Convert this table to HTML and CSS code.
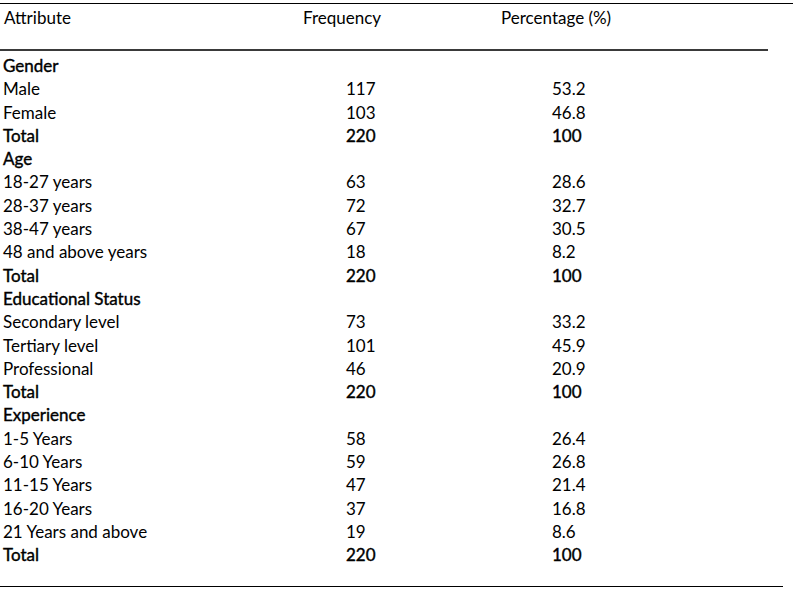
FILE: index.html
```html
<!DOCTYPE html>
<html lang="en">
<head>
<meta charset="utf-8">
<title>Respondent attributes</title>
<link rel="stylesheet" href="styles.css">
</head>
<body>
<div class="table">
  <div class="rule-top"></div>
  <div class="head">
    <span>Attribute</span>
    <span>Frequency</span>
    <span>Percentage (%)</span>
  </div>
  <div class="rule-head"></div>
  <div class="body">
    <div class="row group"><span>Gender</span><span></span><span></span></div>
    <div class="row"><span>Male</span><span>117</span><span>53.2</span></div>
    <div class="row"><span>Female</span><span>103</span><span>46.8</span></div>
    <div class="row total"><span>Total</span><span>220</span><span>100</span></div>
    <div class="row group"><span>Age</span><span></span><span></span></div>
    <div class="row"><span>18-27 years</span><span>63</span><span>28.6</span></div>
    <div class="row"><span>28-37 years</span><span>72</span><span>32.7</span></div>
    <div class="row"><span>38-47 years</span><span>67</span><span>30.5</span></div>
    <div class="row"><span>48 and above years</span><span>18</span><span>8.2</span></div>
    <div class="row total"><span>Total</span><span>220</span><span>100</span></div>
    <div class="row group"><span>Educational Status</span><span></span><span></span></div>
    <div class="row"><span>Secondary level</span><span>73</span><span>33.2</span></div>
    <div class="row"><span>Tertiary level</span><span>101</span><span>45.9</span></div>
    <div class="row"><span>Professional</span><span>46</span><span>20.9</span></div>
    <div class="row total"><span>Total</span><span>220</span><span>100</span></div>
    <div class="row group"><span>Experience</span><span></span><span></span></div>
    <div class="row"><span>1-5 Years</span><span>58</span><span>26.4</span></div>
    <div class="row"><span>6-10 Years</span><span>59</span><span>26.8</span></div>
    <div class="row"><span>11-15 Years</span><span>47</span><span>21.4</span></div>
    <div class="row"><span>16-20 Years</span><span>37</span><span>16.8</span></div>
    <div class="row"><span>21 Years and above</span><span>19</span><span>8.6</span></div>
    <div class="row total"><span>Total</span><span>220</span><span>100</span></div>
  </div>
  <div class="rule-bottom"></div>
</div>
</body>
</html>
```
FILE: styles.css
```css
html, body {
  margin: 0;
  padding: 0;
  background: #fff;
}
body {
  font-family: Lato, "Liberation Sans", sans-serif;
  font-size: 17px;
  color: #000;
}
.table {
  width: 793px;
}
.rule-top {
  margin-top: 3px;
  height: 1px;
  background: #000;
  width: 793px;
}
.head {
  display: grid;
  grid-template-columns: 303px 198px 1fr;
  height: 45px;
  padding-top: 2px;
  box-sizing: border-box;
  line-height: 23px;
}
.head span:first-child {
  padding-left: 4px;
}
.rule-head {
  height: 2px;
  width: 768px;
  background: #3a3a3a;
}
.body {
  padding-top: 3px;
}
.row {
  display: grid;
  grid-template-columns: 346px 206px 1fr;
  height: 23.3px;
  line-height: 23.3px;
}
.row span:first-child {
  padding-left: 3px;
}
.group, .total {
  -webkit-text-stroke: 0.4px #000;
}
.rule-bottom {
  margin-top: 19px;
  height: 1px;
  width: 783px;
  background: #000;
}
```
